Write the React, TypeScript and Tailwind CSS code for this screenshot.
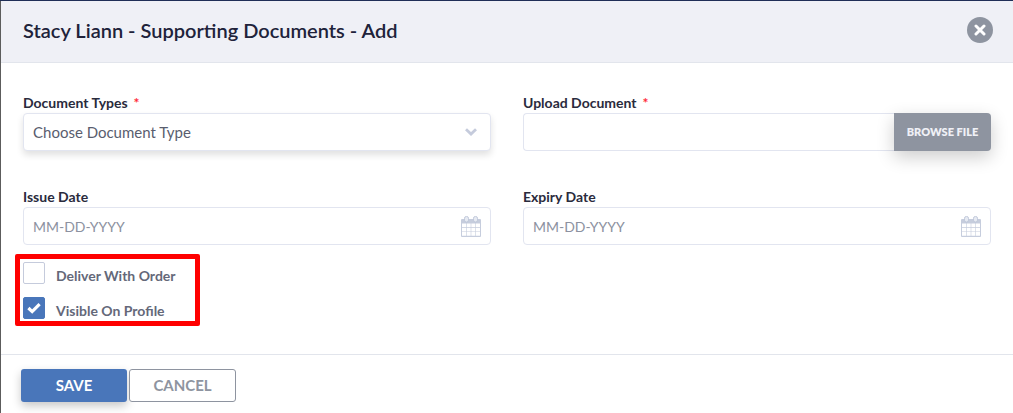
import { useState } from "react";
import type { ReactNode } from "react";

const field =
  "block h-[38px] w-full rounded border border-[#e2e5f0] bg-white px-[9px] text-[#595d6e] outline-none placeholder:text-[#8c91a0]";

function Label({ htmlFor, required, children }: { htmlFor: string; required?: boolean; children: ReactNode }) {
  return (
    <label htmlFor={htmlFor} className="block text-[14px] leading-5 font-bold text-[#2a2b3d]">
      {children}
      {required && <span className="ml-1.5 text-[#ff2b3b]">*</span>}
    </label>
  );
}

function CalendarIcon() {
  return (
    <svg viewBox="0 0 20 21" className="pointer-events-none col-start-1 row-start-1 mr-[10px] h-[21px] w-5 justify-self-end" aria-hidden="true">
      <rect x="0" y="3" width="20" height="18" rx="1" fill="#c6cddd" />
      <rect x="3.5" y="0.5" width="4" height="5.5" rx="1.8" fill="#e6eaf2" stroke="#c0c8da" />
      <rect x="12.5" y="0.5" width="4" height="5.5" rx="1.8" fill="#e6eaf2" stroke="#c0c8da" />
      <path
        fill="#fff"
        d="M1 7.5h4.2v3.6H1zM5.8 7.5h3.9v3.6H5.8zM10.3 7.5h3.9v3.6h-3.9zM14.8 7.5H19v3.6h-4.2zM1 11.7h4.2v3.8H1zM5.8 11.7h3.9v3.8H5.8zM10.3 11.7h3.9v3.8h-3.9zM14.8 11.7H19v3.8h-4.2zM1 16.1h4.2v3.7H1zM5.8 16.1h3.9v3.7H5.8zM10.3 16.1h3.9v3.7h-3.9zM14.8 16.1H19v3.7h-4.2z"
      />
    </svg>
  );
}

function DateField({ id, label }: { id: string; label: string }) {
  return (
    <div>
      <Label htmlFor={id}>{label}</Label>
      <div className="grid items-center">
        <input id={id} type="text" placeholder="MM-DD-YYYY" className={`${field} col-start-1 row-start-1 text-[14px]`} />
        <CalendarIcon />
      </div>
    </div>
  );
}

function CheckRow({ label, initial = false }: { label: string; initial?: boolean }) {
  const [checked, setChecked] = useState(initial);
  return (
    <label className="flex items-start gap-[11px]">
      <span className="grid size-[22px] place-items-center">
        <input
          type="checkbox"
          checked={checked}
          onChange={() => setChecked(!checked)}
          className="col-start-1 row-start-1 size-[22px] appearance-none rounded-[2px] border border-[#c5cbdc] bg-white checked:border-[#4976ba] checked:bg-[#4976ba]"
        />
        {checked && (
          <svg viewBox="0 0 14 12" className="pointer-events-none col-start-1 row-start-1 h-3 w-3.5" aria-hidden="true">
            <path d="M1.4 6 5.2 9.6 12.6 2.2" fill="none" stroke="#fff" strokeWidth="3.2" />
          </svg>
        )}
      </span>
      <span className="pt-1 text-[14px] leading-5 font-bold text-[#646879]">{label}</span>
    </label>
  );
}

export default function App() {
  return (
    <div className="bg-[#1f2e57] pt-px font-['Lato',sans-serif]">
      <div className="border-l border-[#5c5c5c] bg-white">
        <header className="flex items-center justify-between border-b border-[#e2e5ec] bg-[#eff0f6] pt-[15px] pr-5 pb-[18px] pl-[22px]">
          <h1 className="text-[20px] leading-7 font-semibold text-[#20223a]">Stacy Liann - Supporting Documents - Add</h1>
          <button type="button" aria-label="Close" className="grid size-[26px] place-items-center rounded-full bg-[#8e94a0]">
            <svg viewBox="0 0 12 12" className="size-3" aria-hidden="true">
              <path d="M2 2 10 10M10 2 2 10" stroke="#fff" strokeWidth="3" strokeLinecap="round" />
            </svg>
          </button>
        </header>

        <form>
          <div className="px-[22px] pt-[30px] pb-7">
            <div className="grid grid-cols-2 gap-x-8 gap-y-9">
              <div>
                <Label htmlFor="type" required>Document Types</Label>
                <div className="grid items-center">
                  <select
                    id="type"
                    className={`${field} col-start-1 row-start-1 appearance-none text-[15px] shadow-[0_4px_7px_rgba(0,0,0,0.12)]`}
                  >
                    <option>Choose Document Type</option>
                  </select>
                  <svg viewBox="0 0 12 8" className="pointer-events-none col-start-1 row-start-1 mr-3.5 h-2 w-3 justify-self-end" aria-hidden="true">
                    <path d="M1 1.2 6 6 11 1.2" fill="none" stroke="#c5cbdc" strokeWidth="2.8" />
                  </svg>
                </div>
              </div>
              <div>
                <Label htmlFor="file" required>Upload Document</Label>
                <div className="flex">
                  <input id="file" type="text" className={`${field} min-w-0 flex-1 rounded-r-none border-r-0 text-[15px]`} />
                  <button
                    type="button"
                    className="h-[38px] w-[97px] rounded-r bg-[#8e94a0] text-[11px] font-extrabold text-[#eff0f6] shadow-[0_6px_18px_rgba(0,0,0,0.2)]"
                  >
                    BROWSE FILE
                  </button>
                </div>
              </div>
              <DateField id="issue" label="Issue Date" />
              <DateField id="expiry" label="Expiry Date" />
            </div>
            <div className="mt-[9px] -ml-2 flex w-[185px] flex-col gap-[11px] rounded-[2px] border-5 border-[#ff0000] pt-[3px] pl-[3px]">
              <CheckRow label="Deliver With Order" />
              <CheckRow label="Visible On Profile" initial />
            </div>
          </div>

          <footer className="flex gap-0.5 border-t border-[#e2e5ec] px-5 pt-3.5 pb-[11px]">
            <button
              type="submit"
              className="h-[33px] w-[106px] rounded-[3px] bg-[#4976ba] text-[15px] font-bold text-white shadow-[0_4px_10px_rgba(0,0,0,0.22)]"
            >
              SAVE
            </button>
            <button
              type="button"
              className="h-[33px] w-[107px] rounded-[3px] border border-[#8e94a0] bg-white text-[15px] font-bold text-[#8e94a0]"
            >
              CANCEL
            </button>
          </footer>
        </form>
      </div>
    </div>
  );
}
